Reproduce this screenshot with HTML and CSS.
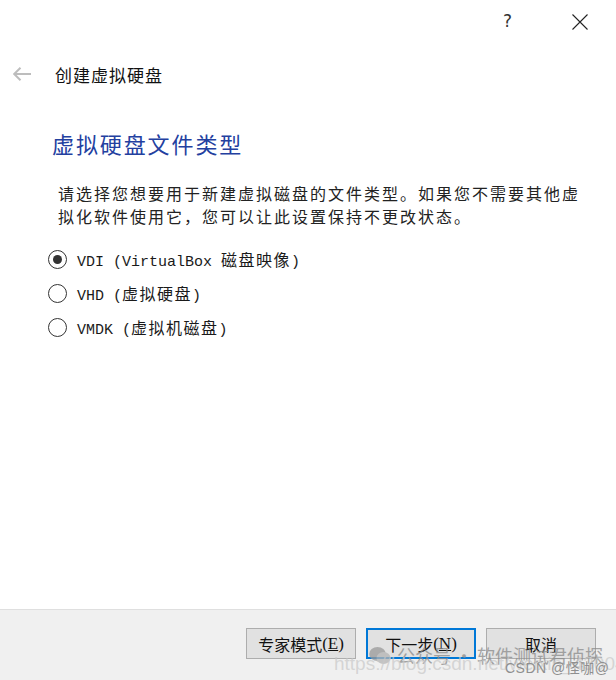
FILE: index.html
```html
<!doctype html>
<html lang="zh-CN">
<head>
    <meta charset="UTF-8" />
    <title>创建虚拟硬盘</title>
    <link rel="stylesheet" href="styles.css">
</head>
<body>
    <div class="dialog">
        <div class="titlebar">
            <span class="help">?</span>
            <svg class="close" width="16" height="16" viewBox="0 0 16 16">
                <path d="M0.5 0.5 L15.5 15.5 M15.5 0.5 L0.5 15.5" stroke="#222" stroke-width="1.1" fill="none"/>
            </svg>
        </div>

        <div class="header">
            <svg class="back" width="19" height="14" viewBox="0 0 19 14">
                <path d="M1 7 H18 M7.5 0.8 L1.2 7 L7.5 13.2" stroke="#bdbdbd" stroke-width="2" fill="none"/>
            </svg>
            <span class="header-title">创建虚拟硬盘</span>
        </div>

        <div class="content">
            <h1>虚拟硬盘文件类型</h1>
            <p class="desc">请选择您想要用于新建虚拟磁盘的文件类型。如果您不需要其他虚拟化软件使用它，您可以让此设置保持不更改状态。</p>

            <div class="options">
                <label class="option">
                    <span class="radio checked"></span>
                    <span class="text"><span class="lat">VDI (VirtualBox </span>磁盘映像<span class="lat">)</span></span>
                </label>
                <label class="option">
                    <span class="radio"></span>
                    <span class="text"><span class="lat">VHD (</span>虚拟硬盘<span class="lat">)</span></span>
                </label>
                <label class="option">
                    <span class="radio"></span>
                    <span class="text"><span class="lat">VMDK (</span>虚拟机磁盘<span class="lat">)</span></span>
                </label>
            </div>
        </div>

        <div class="footer">
            <button class="btn">专家模式<span class="key">(<u>E</u>)</span></button>
            <button class="btn default">下一步<span class="key">(<u>N</u>)</span></button>
            <button class="btn">取消</button>
        </div>

        <!-- watermark from the screenshot source -->
        <div class="watermark">
            <svg class="wx" width="22" height="19" viewBox="0 0 22 19">
                <ellipse cx="8.5" cy="8" rx="8.3" ry="7" fill="#9a9a9a"/>
                <ellipse cx="14.5" cy="12" rx="7" ry="6" fill="#b4b4b4"/>
            </svg>
            <span class="wm-main">公众号 · 软件测试君侦探</span>
        </div>
        <div class="wm-url">https://blog.csdn.net/weixin_4300490</div>
        <div class="wm-csdn">CSDN @怪咖@</div>
    </div>
</body>
</html>
```

FILE: styles.css
```css
body {
    margin: 0;
    background-color: #ffffff;
    font-family: "Noto Sans CJK SC", "Liberation Sans", sans-serif;
    color: #1a1a1a;
}

.dialog {
    position: relative;
    width: 616px;
    height: 680px;
    display: flex;
    flex-direction: column;
    overflow: hidden;
}

.titlebar {
    height: 44px;
    display: flex;
    justify-content: flex-end;
    align-items: center;
    gap: 60px;
    padding-right: 28px;
}

.help {
    font-family: "DejaVu Sans", sans-serif;
    font-size: 17px;
    color: #333;
    line-height: 16px;
    margin-top: -2px;
}

.close {
    display: block;
    margin-top: -1px;
}

.header {
    margin-top: 18px;
    height: 24px;
    display: flex;
    align-items: center;
    padding-left: 13px;
}

.back {
    display: block;
    margin-right: 23px;
}

.header-title {
    font-size: 17px;
    letter-spacing: 1px;
    color: #111;
}

.content {
    padding-left: 52px;
    flex: 1;
}

h1 {
    margin: 42px 0 0 0;
    font-size: 22px;
    line-height: 30px;
    font-weight: normal;
    letter-spacing: 1.9px;
    color: #23409f;
}

.desc {
    margin: 24px 0 0 6px;
    width: 524px;
    font-size: 16px;
    line-height: 23px;
    letter-spacing: 2px;
    color: #222;
}

.options {
    margin-top: 14px;
    display: flex;
    flex-direction: column;
}

.option {
    height: 34px;
    display: flex;
    align-items: center;
    margin-left: -4px;
}

.radio {
    width: 17px;
    height: 17px;
    border: 1px solid #333;
    border-radius: 50%;
    box-sizing: content-box;
    display: flex;
    align-items: center;
    justify-content: center;
    margin-right: 10px;
    background: #fff;
}

.radio.checked::after {
    content: "";
    width: 9px;
    height: 9px;
    border-radius: 50%;
    background: #333;
}

.text {
    font-size: 16px;
    letter-spacing: 1.5px;
    color: #1a1a1a;
}

.lat {
    font-family: "Liberation Mono", monospace;
    font-size: 15px;
    letter-spacing: 0;
}

.footer {
    height: 71px;
    border-top: 1px solid #dfdfdf;
    background-color: #f0f0f0;
    display: flex;
    justify-content: flex-end;
    align-items: flex-start;
    gap: 10px;
    padding: 18px 20px 0 0;
    box-sizing: border-box;
}

.btn {
    width: 110px;
    height: 31px;
    background-color: #e1e1e1;
    border: 1px solid #adadad;
    font-family: "Noto Sans CJK SC", sans-serif;
    font-size: 16px;
    color: #111;
    padding: 0;
    display: flex;
    align-items: center;
    justify-content: center;
}

.btn.default {
    border: 2px solid #0078d7;
}

.key {
    font-family: "Liberation Serif", serif;
    font-size: 17px;
}

.watermark {
    position: absolute;
    left: 369px;
    top: 644px;
    display: flex;
    align-items: center;
    gap: 6px;
    opacity: 0.75;
    white-space: nowrap;
}

.wx {
    display: block;
}

.wm-main {
    font-size: 18px;
    line-height: 22px;
    color: #8a8a8a;
}

.wm-url {
    position: absolute;
    left: 334px;
    top: 653px;
    font-family: "Liberation Sans", sans-serif;
    font-size: 19px;
    color: rgba(200, 200, 200, 0.7);
    white-space: nowrap;
}

.wm-csdn {
    position: absolute;
    left: 505px;
    top: 657px;
    font-family: "Liberation Sans", "Noto Sans CJK SC", sans-serif;
    font-size: 14px;
    color: #8f8f8f;
    letter-spacing: 0.5px;
    white-space: nowrap;
}
```
